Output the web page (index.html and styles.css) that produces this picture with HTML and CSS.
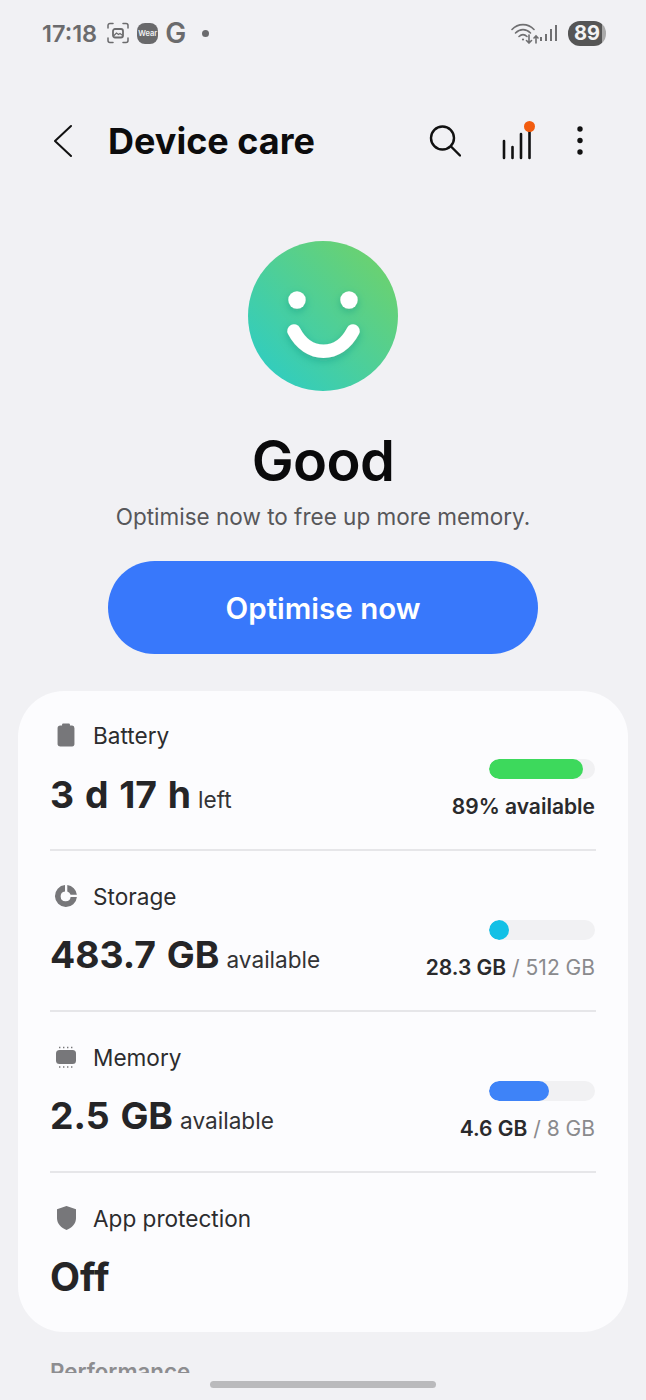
FILE: index.html
```html
<!DOCTYPE html>
<html lang="en">
<head>
<meta charset="utf-8">
<title>Device care</title>
<link rel="stylesheet" href="styles.css">
</head>
<body>
<div class="screen">
  <div class="status">
    <div class="status-left">
      <span class="clock">17:18</span>
      <svg class="st-icon" width="22" height="22" viewBox="0 0 22 22" fill="none" stroke="#6b6b6d" stroke-width="1.500" stroke-linecap="round"><path d="M1 6V3.500A2 2 0 0 1 3 1.500H6M16 1.500H19A2 2 0 0 1 21 3.500V6M21 16V18.500A2 2 0 0 1 19 20.500H16M6 20.500H3A2 2 0 0 1 1 18.500V16"/><rect x="6" y="7" width="10" height="8.500" rx="2" stroke-width="1.800"/><path d="M7 13.500l2.500-2.500 2 1.500 1.500-1 2 1.500" stroke-width="1.200"/></svg>
      <span class="wear">Wear</span>
      <span class="g">G</span>
      <span class="dot"></span>
    </div>
    <div class="status-right">
      <svg class="wifi" width="28" height="22" viewBox="0 0 28 22" fill="none" stroke="#6f6f71" stroke-width="1.600" stroke-linecap="round"><path d="M1 7.500C7 1 17 1 23 7.500"/><path d="M4.500 11C9 6.500 15 6.500 19.500 11"/><path d="M8 14.500C10.500 12.200 13.500 12.200 16 14.500"/><circle cx="12" cy="17.500" r="1.100" fill="#6f6f71" stroke="none"/><path d="M18 13v8M15.500 18.500l2.500 2.500 2.500-2.500M25 21v-7M23 16l2-2 2 2"/></svg>
      <svg class="signal" width="18" height="18" viewBox="0 0 18 18" fill="#707072"><rect x="1" y="13" width="2" height="4"/><rect x="6" y="10" width="2" height="7"/><rect x="11" y="5" width="2" height="12"/><rect x="16" y="1" width="2" height="16"/></svg>
      <span class="batt"><span class="batt-num">89</span></span>
    </div>
  </div>

  <header class="appbar">
    <svg class="back" width="20" height="34" viewBox="0 0 20 34" fill="none" stroke="#111" stroke-width="2" stroke-linecap="round" stroke-linejoin="round"><path d="M17 2L1 17l16 15"/></svg>
    <h1 class="title">Device care</h1>
    <div class="actions">
      <svg width="32" height="32" viewBox="0 0 32 32" fill="none" stroke="#111" stroke-width="2.400" stroke-linecap="round"><circle cx="13.500" cy="13" r="11.500"/><path d="M22 21.500L31 30.500"/></svg>
      <span class="chart">
        <svg width="30" height="38" viewBox="0 0 30 38" fill="none" stroke="#111" stroke-width="2.600" stroke-linecap="round"><path d="M2 19v17M10.500 25v11M19 12v24M27.500 7v29"/></svg>
        <i class="notif"></i>
      </span>
      <svg class="kebab" width="8" height="30" viewBox="0 0 8 30" fill="#111"><circle cx="4" cy="3" r="2.700"/><circle cx="4" cy="14.500" r="2.700"/><circle cx="4" cy="26" r="2.700"/></svg>
    </div>
  </header>

  <section class="hero">
    <svg class="face" width="150" height="150" viewBox="0 0 150 150">
      <defs>
        <linearGradient id="faceg" x1="0.150" y1="0.850" x2="0.850" y2="0.150">
          <stop offset="0" stop-color="#34cdbb"/>
          <stop offset="1" stop-color="#69d173"/>
        </linearGradient>
        <filter id="fs" x="-30%" y="-30%" width="160%" height="170%"><feDropShadow dx="0" dy="3" stdDeviation="4" flood-color="#1a8f80" flood-opacity="0.450"/></filter>
      </defs>
      <circle cx="75" cy="75" r="75" fill="url(#faceg)"/>
      <g filter="url(#fs)">
        <circle cx="49" cy="59" r="8.700" fill="#fff"/>
        <circle cx="101" cy="59" r="8.700" fill="#fff"/>
        <path d="M46 90C60 117 91 117 105 90" fill="none" stroke="#fff" stroke-width="13.500" stroke-linecap="round"/>
      </g>
    </svg>
    <div class="good">Good</div>
    <p class="sub">Optimise now to free up more memory.</p>
    <div class="optimise">Optimise now</div>
  </section>

  <section class="card">
    <div class="row">
      <div class="label">
        <span class="ic"><svg width="18" height="24" viewBox="1.500 0.500 16 23" preserveAspectRatio="none" fill="#77777a"><path d="M7 1h5a1 1 0 0 1 1 1v1h2a2.500 2.500 0 0 1 2 2.500V21a2.500 2.500 0 0 1-2 2H4.500A2.500 2.500 0 0 1 2 21V5.500A2.500 2.500 0 0 1 4.500 3H6V2a1 1 0 0 1 1-1z"/></svg></span>
        <span>Battery</span>
      </div>
      <div class="values">
        <div class="big">3 d 17 h<small>left</small></div>
        <div class="meter">
          <div class="track"><div class="fill fill-green" style="width:89%"></div></div>
          <div class="note strong">89% available</div>
        </div>
      </div>
    </div>
    <div class="row">
      <div class="label">
        <span class="ic"><svg width="24" height="24" viewBox="0 0 24 24"><path d="M13.300 1.100A11 11 0 0 1 22.900 10.700H16.600A5 5 0 0 0 13.300 7.400z" fill="#77777a"/><path d="M11 1.100V7.400A5 5 0 1 0 16.600 13H22.900A11 11 0 1 1 11 1.100z" fill="#77777a"/></svg></span>
        <span>Storage</span>
      </div>
      <div class="values">
        <div class="big">483.7 GB<small>available</small></div>
        <div class="meter">
          <div class="track"><div class="fill fill-blue" style="width:20px"></div></div>
          <div class="note"><b>28.3 GB</b> / 512 GB</div>
        </div>
      </div>
    </div>
    <div class="row">
      <div class="label">
        <span class="ic"><svg width="24" height="24" viewBox="0 0 24 24"><rect x="2" y="5" width="20" height="14" rx="3.500" fill="#77777a"/><path d="M5 2.500h1.400M9 2.500h1.400M13 2.500h1.400M17 2.500h1.400M5 22h1.400M9 22h1.400M13 22h1.400M17 22h1.400" stroke="#77777a" stroke-width="1.500"/></svg></span>
        <span>Memory</span>
      </div>
      <div class="values">
        <div class="big">2.5 GB<small>available</small></div>
        <div class="meter">
          <div class="track"><div class="fill fill-royal" style="width:60px"></div></div>
          <div class="note"><b>4.6 GB</b> / 8 GB</div>
        </div>
      </div>
    </div>
    <div class="row">
      <div class="label">
        <span class="ic"><svg width="19" height="24" viewBox="1.500 1 19 24" fill="#77777a"><path d="M11 1l9.500 3.300V13c0 5.500-4 9.800-9.500 12C5.500 22.800 1.500 18.500 1.500 13V4.300z"/></svg></span>
        <span>App protection</span>
      </div>
      <div class="values">
        <div class="big big-off">Off</div>
      </div>
    </div>
  </section>

  <div class="clip"><div class="perf">Performance</div></div>
  <div class="home"></div>
</div>
</body>
</html>
```
FILE: styles.css
```css
* { box-sizing: border-box; }
html, body { margin: 0; padding: 0; }
body { background: #f1f1f4; font-family: Inter, "Noto Sans", "Liberation Sans", sans-serif; color: #252527; }
.screen { width: 646px; height: 1400px; overflow: hidden; background: #f1f1f4; display: flex; flex-direction: column; }

.status { height: 66px; padding: 20px 40px 0 42px; display: flex; justify-content: space-between; align-items: flex-start; }
.status-left { display: flex; align-items: center; height: 26px; color: #6b6b6d; }
.clock { font-size: 23.500px; font-weight: 600; margin-right: 10px; }
.wear { width: 21px; height: 21px; border-radius: 8px; background: #69696b; color: #f1f1f4; font-size: 7.500px; font-weight: 600; display: flex; align-items: center; justify-content: center; margin-left: 8px; }
.g { font-size: 28px; font-weight: 600; line-height: 26px; margin-left: 7px; }
.dot { width: 7px; height: 7px; border-radius: 50%; background: #6b6b6d; margin-left: 16px; }
.status-right { display: flex; align-items: center; height: 26px; }
.signal { margin-left: 0; }
.batt { width: 38px; height: 25px; border-radius: 12px; background: linear-gradient(90deg, #555 0 89%, #aaa 89%); color: #f3f3f3; display: flex; align-items: center; justify-content: center; margin-left: 11px; }
.batt-num { font-size: 20px; font-weight: 700; }

.appbar { height: 78px; margin-top: 36px; padding: 0 62px 0 54px; display: flex; align-items: center; }
.back { flex: none; }
.title { margin: 0 0 0 34px; font-size: 36px; font-weight: 700; color: #0c0c0d; flex: 1; }
.actions { display: flex; align-items: center; gap: 41px; }
.chart { position: relative; display: block; width: 30px; height: 38px; }
.kebab { margin-left: 3px; }
.notif { position: absolute; top: -1px; right: -3px; width: 11px; height: 11px; border-radius: 50%; background: #f25c0f; }

.hero { display: flex; flex-direction: column; align-items: center; padding-top: 61px; }
.face { display: block; }
.good { font-size: 56px; font-weight: 600; letter-spacing: -0.6px; line-height: 68px; color: #0a0a0b; margin-top: 36px; }
.sub { margin: 8px 0 0; font-size: 22.500px; line-height: 28px; color: #57575a; }
.optimise { margin-top: 30px; width: 430px; height: 93px; border-radius: 47px; background: #3878fb; color: #fff; font-size: 29.500px; font-weight: 600; display: flex; align-items: center; justify-content: center; }

.card { margin: 37px 18px 0; height: 641px; background: #fcfcfe; border-radius: 46px; padding: 0 32px; }
.row { height: 161px; padding-top: 27px; border-bottom: 2px solid #e6e6e9; }
.row:first-child { height: 160px; padding-top: 26px; }
.row:last-child { border-bottom: 0; }
.label { display: flex; align-items: center; height: 36px; font-size: 22.600px; color: #2c2c2e; }
.ic { width: 32px; margin-right: 11px; flex: none; display: flex; justify-content: center; align-items: center; }
.values { display: flex; justify-content: space-between; align-items: flex-start; margin-top: 16px; }
.row:first-child .values { margin-top: 17px; }
.big { font-size: 37.300px; font-weight: 700; word-spacing: 2px; line-height: 50px; color: #252527; white-space: nowrap; flex: none; }
.big-off { font-size: 39px; }
.big small { font-size: 22.600px; font-weight: 400; word-spacing: 0; margin-left: 7px; color: #333335; }
.meter { flex: none; margin-top: -10px; margin-right: 1px; display: flex; flex-direction: column; align-items: flex-end; }
.row:first-child .meter { margin-top: -11px; }
.track { width: 106px; height: 20px; border-radius: 10px; background: #f1f1f3; overflow: hidden; }
.fill { height: 20px; border-radius: 10px; }
.fill-green { background: #3dd95c; }
.fill-blue { background: #12c0e6; }
.fill-royal { background: #3e83f8; }
.note { margin-top: 14px; font-size: 21px; line-height: 28px; color: #8a8a8d; white-space: nowrap; }
.note b, .note.strong { font-weight: 600; color: #2a2a2c; }

.clip { height: 41px; overflow: hidden; padding: 27px 0 0 50px; }
.perf { font-size: 22.300px; font-weight: 600; line-height: 26px; color: #8d8d90; }
.home { width: 226px; height: 7px; border-radius: 4px; background: #bababc; margin: 8px auto 0; }
```
